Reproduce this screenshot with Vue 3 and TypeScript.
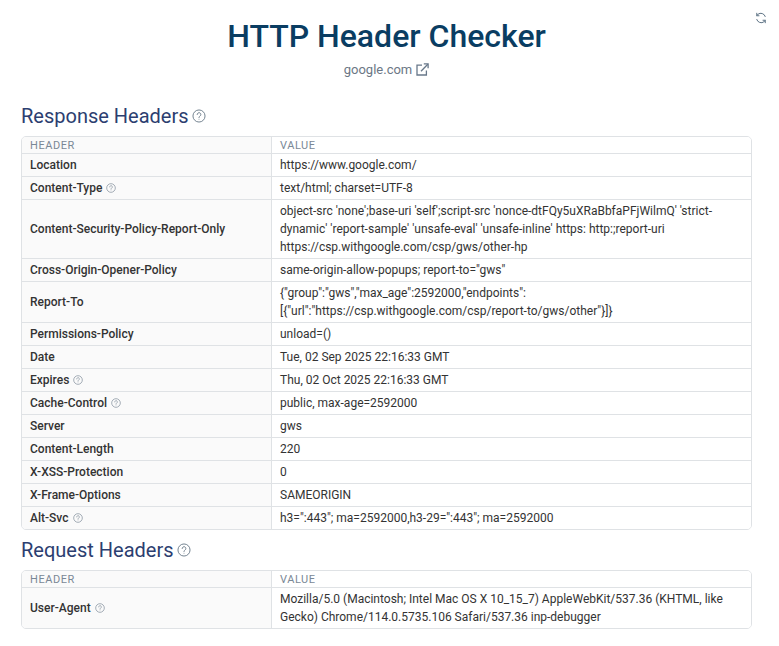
<script setup lang="ts">
interface Row { name: string; value: string[]; help?: boolean }
const response: Row[] = [
  { name: 'Location', value: ['https://www.google.com/'] },
  { name: 'Content-Type', value: ['text/html; charset=UTF-8'], help: true },
  { name: 'Content-Security-Policy-Report-Only', value: ["object-src 'none';base-uri 'self';script-src 'nonce-dtFQy5uXRaBbfaPFjWilmQ' 'strict-", "dynamic' 'report-sample' 'unsafe-eval' 'unsafe-inline' https: http:;report-uri", 'https://csp.withgoogle.com/csp/gws/other-hp'] },
  { name: 'Cross-Origin-Opener-Policy', value: ['same-origin-allow-popups; report-to="gws"'] },
  { name: 'Report-To', value: ['{"group":"gws","max_age":2592000,"endpoints":', '[{"url":"https://csp.withgoogle.com/csp/report-to/gws/other"}]}'] },
  { name: 'Permissions-Policy', value: ['unload=()'] },
  { name: 'Date', value: ['Tue, 02 Sep 2025 22:16:33 GMT'] },
  { name: 'Expires', value: ['Thu, 02 Oct 2025 22:16:33 GMT'], help: true },
  { name: 'Cache-Control', value: ['public, max-age=2592000'], help: true },
  { name: 'Server', value: ['gws'] },
  { name: 'Content-Length', value: ['220'] },
  { name: 'X-XSS-Protection', value: ['0'] },
  { name: 'X-Frame-Options', value: ['SAMEORIGIN'] },
  { name: 'Alt-Svc', value: ['h3=":443"; ma=2592000,h3-29=":443"; ma=2592000'], help: true },
]
const request: Row[] = [
  { name: 'User-Agent', value: ['Mozilla/5.0 (Macintosh; Intel Mac OS X 10_15_7) AppleWebKit/537.36 (KHTML, like', 'Gecko) Chrome/114.0.5735.106 Safari/537.36 inp-debugger'], help: true },
]
const sections = [
  { title: 'Response Headers', rows: response },
  { title: 'Request Headers', rows: request },
]
</script>

<template>
  <div class="page">
    <button class="refresh" aria-label="Refresh">
      <svg width="12" height="12" viewBox="0 0 24 24" fill="none" stroke="#5f7486" stroke-width="2" stroke-linecap="round" stroke-linejoin="round">
        <path d="M20.5 9A9 9 0 0 0 6 4.6L3.5 7" />
        <path d="M3.5 2.5V7.5H8" />
        <path d="M3.5 15A9 9 0 0 0 18 19.4L20.5 17" />
        <path d="M20.5 21.5V16.5H16" />
      </svg>
    </button>
    <h1 class="title">HTTP Header Checker</h1>
    <div class="domain">
      <span>google.com</span>
      <svg width="13" height="13" viewBox="0 0 13 13" fill="none" stroke="#68788a" stroke-width="1.3">
        <path d="M6 2.2H1v9.8h9.4V7.5" />
        <path d="M5 8.2 11.8 1.2" />
        <path d="M7.8 .9h4.3v4.3" />
      </svg>
    </div>
    <section v-for="s in sections" :key="s.title" class="section">
      <h2 class="heading">
        <span>{{ s.title }}</span>
        <svg class="help-lg" viewBox="0 0 16 16" fill="none" stroke="#6f7f8c" stroke-width="1.1">
          <circle cx="8" cy="8" r="6.9" />
          <path d="M5.9 6.3a2.1 2.1 0 1 1 3.3 1.7C8.4 8.6 8 9 8 10" stroke-linecap="round" />
          <circle cx="8" cy="12" r=".5" fill="#6f7f8c" stroke="none" />
        </svg>
      </h2>
      <div class="table">
        <div class="row head">
          <div class="cell key">HEADER</div>
          <div class="cell val">VALUE</div>
        </div>
        <div v-for="r in s.rows" :key="r.name" class="row">
          <div class="cell key name">
            <span>{{ r.name }}</span>
            <svg v-if="r.help" class="help-sm" viewBox="0 0 16 16" fill="none" stroke="#7d8b97" stroke-width="1.1">
              <circle cx="8" cy="8" r="6.9" />
              <path d="M5.9 6.3a2.1 2.1 0 1 1 3.3 1.7C8.4 8.6 8 9 8 10" stroke-linecap="round" />
              <circle cx="8" cy="12" r=".5" fill="#7d8b97" stroke="none" />
            </svg>
          </div>
          <div class="cell val text">
            <div v-for="line in r.value" :key="line">{{ line }}</div>
          </div>
        </div>
      </div>
    </section>
  </div>
</template>

<style>
html, body { background: #fff; }
</style>

<style scoped>
.page {
  position: relative;
  box-sizing: border-box;
  width: 779px;
  height: 646px;
  padding: 14px 27px 0 21px;
  font-family: Roboto, "Liberation Sans", sans-serif;
  color: #333;
  overflow: hidden;
}
.refresh {
  position: absolute;
  top: 12px;
  right: 12px;
  padding: 0;
  border: 0;
  background: none;
  display: flex;
}
.title {
  margin: 0;
  font-size: 32px;
  line-height: 44px;
  font-weight: 500;
  color: #0a3d62;
  text-align: center;
}
.domain {
  margin-top: 1px;
  height: 20px;
  display: flex;
  justify-content: center;
  align-items: center;
  gap: 4px;
  font-size: 13px;
  color: #6b7785;
}
.section:first-of-type { margin-top: 19px; }
.heading {
  margin: 0 0 2px;
  height: 36px;
  display: flex;
  align-items: center;
  gap: 3px;
  font-size: 20px;
  font-weight: 400;
  color: #2c3e70;
}
.help-lg { width: 14px; height: 14px; }
.help-sm { width: 10px; height: 10px; margin-left: 4px; }
.table {
  border: 1px solid #dfe2e5;
  border-radius: 5px;
  overflow: hidden;
  margin-bottom: 2px;
}
.row {
  display: grid;
  grid-template-columns: 250px 1fr;
  border-top: 1px solid #dfe2e5;
}
.row:first-child { border-top: 0; }
.cell {
  display: flex;
  align-items: center;
  padding: 2px 8px;
  font-size: 12px;
  line-height: 18px;
}
.key { background: #fafafa; border-right: 1px solid #dfe2e5; }
.val { background: #fff; }
.head .cell {
  box-sizing: border-box;
  padding-top: 1px;
  padding-bottom: 0;
  height: 16px;
  line-height: 15px;
  font-size: 11px;
  letter-spacing: 0.55px;
  color: #7a8896;
}
.name { font-weight: 500; color: #333; }
.text { display: block; color: #333; }
</style>
